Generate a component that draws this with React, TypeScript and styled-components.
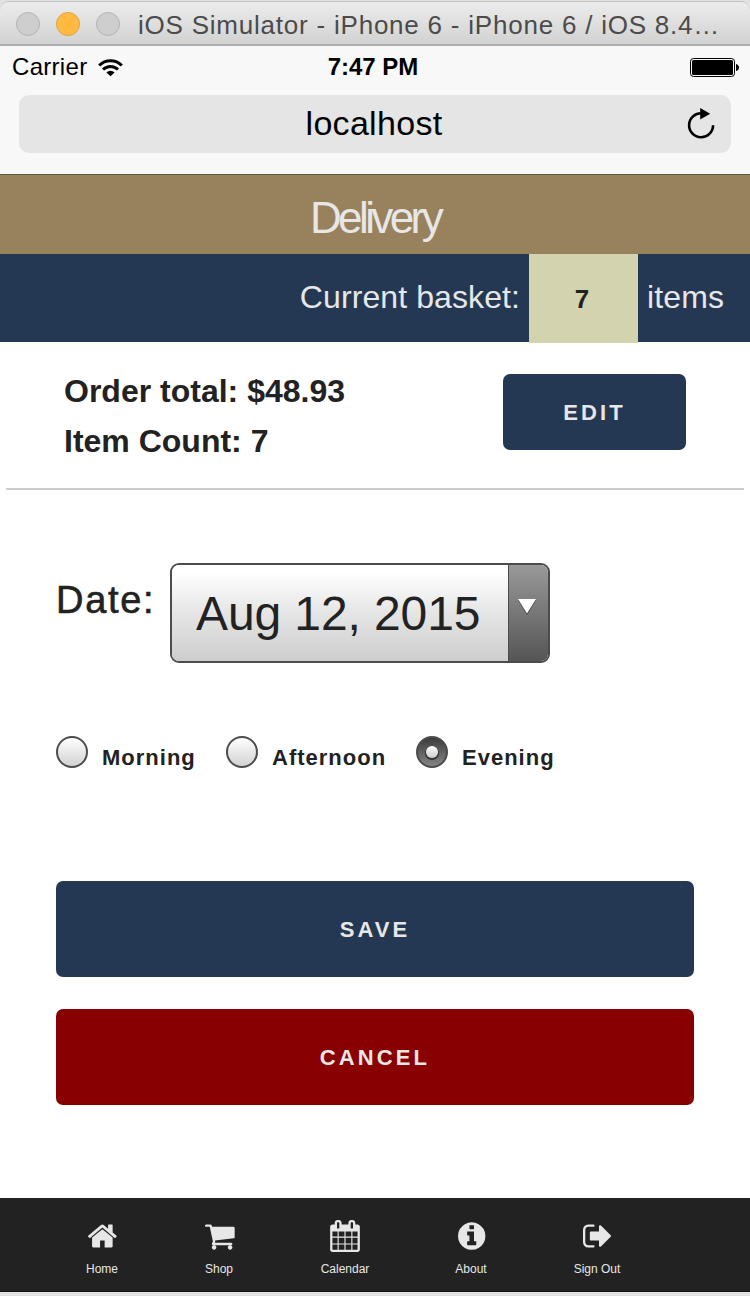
import React from "react";
import styled, { createGlobalStyle } from "styled-components";

const GlobalStyle = createGlobalStyle`
  * { box-sizing: border-box; }
  html, body { margin: 0; padding: 0; background: #e2e2e2; }
  body { font-family: "Liberation Sans", Arial, Helvetica, sans-serif; color: #222; }
  h1, h2 { margin: 0; font-weight: normal; }
  p { margin: 0; }
  button { font-family: inherit; border: 0; padding: 0; }
`;

const Simulator = styled.div`
  width: 750px;
  height: 1296px;
  display: flex;
  flex-direction: column;
  overflow: hidden;
  background: #e2e2e2;
`;

const TitleBar = styled.header`
  flex: none;
  height: 45px;
  margin-top: 1px;
  padding: 2px 0 0 16px;
  display: flex;
  align-items: center;
  border: 1px solid #c0c0c0;
  border-width: 1px 0 2px;
  border-bottom-color: #adadad;
  border-radius: 9px 9px 0 0;
  background: linear-gradient(#ececec, #d2d2d2);
`;

const Lights = styled.div`
  display: flex;
  gap: 16px;
  margin-right: 18px;
`;

const Light = styled.span<{ $active?: boolean }>`
  width: 24px;
  height: 24px;
  border-radius: 50%;
  border: 1px solid ${(p) => (p.$active ? "#dfa032" : "#b2b2b2")};
  background: ${(p) => (p.$active ? "radial-gradient(#ffb53a, #ffc04a)" : "#cecece")};
`;

const WindowTitle = styled.h1`
  padding-top: 2px;
  color: #4b4b4b;
  font-size: 26px;
  line-height: 30px;
  letter-spacing: 0.78px;
  white-space: nowrap;
`;

const BrowserChrome = styled.div`
  flex: none;
  height: 129px;
  background: #f8f8f8;
  border-bottom: 1px solid #655a42;
  color: #000;
`;

const StatusBar = styled.div`
  height: 49px;
  display: grid;
  grid-template-columns: 1fr auto 1fr;
  align-items: center;
  padding: 0 11px 7px 12px;
  font-size: 24px;
  line-height: 28px;
`;

const Carrier = styled.div`
  display: flex;
  align-items: center;
  gap: 11px;
  letter-spacing: 0.3px;
`;

const Clock = styled.strong`
  margin: 0 5px 0 0;
`;

const BatteryIcon = styled.svg`
  justify-self: end;
  display: block;
`;

const AddressBar = styled.div`
  height: 58px;
  margin: 0 19px;
  padding: 0 15px;
  display: grid;
  grid-template-columns: 28px 1fr 30px;
  align-items: center;
  background: #e5e5e5;
  border-radius: 10px;
`;

const Address = styled.span`
  padding-bottom: 2px;
  text-align: center;
  font-size: 34px;
  line-height: 38px;
  letter-spacing: 0.3px;
`;

const ReloadIcon = styled.svg`
  display: block;
  margin-top: -2px;
`;

const PageHeader = styled.div`
  flex: none;
  height: 79px;
  padding-top: 18px;
  background: #97825d;
  color: #e7e7e7;
  text-align: center;
`;

const PageTitle = styled.h2`
  font-size: 44px;
  line-height: 50px;
  letter-spacing: -3.6px;
`;

const BasketBar = styled.div`
  flex: none;
  position: relative;
  z-index: 1;
  height: 88px;
  display: flex;
  justify-content: flex-end;
  padding-right: 26px;
  background: #253853;
  color: #e7e7e7;
  font-size: 32px;
  line-height: 86px;
  letter-spacing: 0.1px;
`;

const BasketCount = styled.strong`
  width: 109px;
  height: 89px;
  margin: 0 9px;
  padding-right: 3px;
  text-align: center;
  line-height: 90px;
  font-size: 26px;
  background: #d3d3af;
  color: #222;
`;

const Content = styled.main`
  flex: none;
  height: 856px;
  background: #fff;
`;

const Summary = styled.section`
  height: 148px;
  margin: 0 6px;
  padding: 24px 58px 0;
  display: flex;
  justify-content: space-between;
  border-bottom: 2px solid #ccc;
`;

const Totals = styled.div`
  font-weight: bold;
  font-size: 32px;
  line-height: 50px;
`;

const Button = styled.button<{ $danger?: boolean; $compact?: boolean }>`
  display: block;
  width: ${(p) => (p.$compact ? "183px" : "100%")};
  height: ${(p) => (p.$compact ? "76px" : "96px")};
  margin-top: ${(p) => (p.$compact ? "8px" : "0")};
  padding-top: 2px;
  border-radius: 7px;
  background: ${(p) => (p.$danger ? "#880000" : "#253853")};
  color: #e7e7e7;
  font-size: 22px;
  font-weight: bold;
  letter-spacing: 3.1px;
`;

const DeliveryForm = styled.form`
  padding: 73px 56px 0;
`;

const DateRow = styled.div`
  display: flex;
  gap: 15px;
`;

const DateLabel = styled.label`
  width: 99px;
  padding-top: 14px;
  font-size: 38px;
  line-height: 46px;
  letter-spacing: 1.7px;
  white-space: nowrap;
  -webkit-text-stroke: 0.6px #222;
`;

const DateSelect = styled.div`
  width: 380px;
  height: 100px;
  display: flex;
  overflow: hidden;
  border: 2px solid #4c4c4c;
  border-radius: 9px;
`;

const DateValue = styled.span`
  flex: 1;
  padding-left: 24px;
  font-size: 48px;
  line-height: 98px;
  letter-spacing: -0.1px;
  white-space: nowrap;
  background: linear-gradient(#fff 8%, #e5e5e5 50%, #cdcdcd);
`;

const DateArrow = styled.span`
  width: 40px;
  display: flex;
  justify-content: center;
  padding: 33px 3px 0 0;
  border-left: 1px solid #4c4c4c;
  background: linear-gradient(#999, #555);
`;

const TimeRow = styled.div`
  display: flex;
  margin-top: 73px;
  gap: 29px;
`;

const TimeOption = styled.label<{ $width: number }>`
  display: flex;
  width: ${(p) => p.$width}px;
  gap: 14px;
  font-size: 22px;
  font-weight: bold;
  line-height: 26px;
  letter-spacing: 1px;
  white-space: nowrap;
`;

const Radio = styled.span<{ $checked?: boolean }>`
  flex: none;
  width: 32px;
  height: 32px;
  display: grid;
  place-items: center;
  border: 2px solid #4c4c4c;
  border-radius: 50%;
  background: ${(p) => (p.$checked ? "linear-gradient(#3c3c3c, #858585)" : "linear-gradient(#fff, #d2d2d2)")};

  &::after {
    content: "";
    display: ${(p) => (p.$checked ? "block" : "none")};
    width: 12px;
    height: 12px;
    border-radius: 50%;
    background: linear-gradient(#fff, #ccc);
    box-shadow: 0 1px 0 1px #333;
  }
`;

const TimeText = styled.span`
  padding-top: 9px;
`;

const Actions = styled.div`
  display: grid;
  gap: 32px;
  margin-top: 110px;
`;

const TabBar = styled.nav`
  flex: none;
  height: 94px;
  display: flex;
  padding: 22px 0 0 48px;
  background: #222;
  border-bottom: 1px solid #111;
`;

const Tab = styled.a<{ $width: number }>`
  width: ${(p) => p.$width}px;
  display: flex;
  flex-direction: column;
  align-items: center;
  color: #e7e7e7;
  font-size: 12px;
  line-height: 14px;
  gap: 10px;
`;

const TabIcon = styled.svg`
  width: 32px;
  height: 32px;
  fill: currentColor;
`;

const tabs = [
  {
    label: "Home",
    width: 108,
    box: "-20 0 1792 1792",
    path: "M1472 992v480q0 26-19 45t-45 19h-384v-384h-256v384h-384q-26 0-45-19t-19-45v-480q0-1 .5-3t.5-3l575-474 575 474q1 2 1 6zm223-69l-62 74q-8 9-21 11h-3q-13 0-21-7l-692-577-692 577q-12 8-24 7-13-2-21-11l-62-74q-8-10-7-23.500t11-21.500l719-599q32-26 76-26t76 26l244 204v-195q0-14 9-23t23-9h192q14 0 23 9t9 23v408l219 182q10 8 11 21.500t-7 23.500z",
  },
  {
    label: "Shop",
    width: 126,
    box: "-110 0 1792 1792",
    path: "M640 1536q0 52-38 90t-90 38-90-38-38-90 38-90 90-38 90 38 38 90zm896 0q0 52-38 90t-90 38-90-38-38-90 38-90 90-38 90 38 38 90zm128-1088v512q0 24-16.500 42.500t-40.500 21.500l-1044 122q13 60 13 70 0 16-24 64h920q26 0 45 19t19 45-19 45-45 19h-1024q-26 0-45-19t-19-45q0-11 8-31.500t16-36 21.500-40 15.500-29.500l-177-823h-204q-26 0-45-19t-19-45 19-45 45-19h256q16 0 28.500 6.500t19.500 15.500 13 24.500 8 26 5.500 29.500 4.500 26h1201q26 0 45 19t19 45z",
  },
  {
    label: "Calendar",
    width: 126,
    box: "0 0 1792 1792",
    path: "M192 1664h288v-288h-288v288zm352 0h320v-288h-320v288zm-352-352h288v-320h-288v320zm352 0h320v-320h-320v320zm-352-384h288v-288h-288v288zm736 736h320v-288h-320v288zm-384-736h320v-288h-320v288zm768 736h288v-288h-288v288zm-384-352h320v-320h-320v320zm-352-864v-288q0-13-9.500-22.500t-22.500-9.500h-64q-13 0-22.500 9.500t-9.500 22.500v288q0 13 9.500 22.500t22.500 9.500h64q13 0 22.500-9.500t9.500-22.500zm736 864h288v-320h-288v320zm-384-384h320v-288h-320v288zm384 0h288v-288h-288v288zm32-480v-288q0-13-9.500-22.500t-22.500-9.500h-64q-13 0-22.500 9.500t-9.500 22.500v288q0 13 9.500 22.500t22.500 9.500h64q13 0 22.500-9.500t9.500-22.500zm384-64v1280q0 52-38 90t-90 38h-1408q-52 0-90-38t-38-90v-1280q0-52 38-90t90-38h128v-96q0-66 47-113t113-47h64q66 0 113 47t47 113v96h384v-96q0-66 47-113t113-47h64q66 0 113 47t47 113v96h128q52 0 90 38t38 90z",
  },
  {
    label: "About",
    width: 126,
    box: "-40 0 1792 1792",
    path: "M1152 1376v-160q0-14-9-23t-23-9h-96v-512q0-14-9-23t-23-9h-320q-14 0-23 9t-9 23v160q0 14 9 23t23 9h96v320h-96q-14 0-23 9t-9 23v160q0 14 9 23t23 9h448q14 0 23-9t9-23zm-128-896v-160q0-14-9-23t-23-9h-192q-14 0-23 9t-9 23v160q0 14 9 23t23 9h192q14 0 23-9t9-23zm640 416q0 209-103 385.500t-279.500 279.500-385.500 103-385.500-103-279.500-279.500-103-385.500 103-385.500 279.500-279.500 385.500-103 385.500 103 279.500 279.500 103 385.500z",
  },
  {
    label: "Sign Out",
    width: 126,
    box: "-48 0 1792 1792",
    path: "M704 1440q0 4 1 20t.5 26.500-3 23.500-10 19.500-20.500 6.500h-320q-119 0-203.500-84.500t-84.500-203.500v-704q0-119 84.500-203.500t203.500-84.500h320q13 0 22.500 9.500t9.500 22.500q0 4 1 20t.5 26.500-3 23.500-10 19.500-20.500 6.500h-320q-66 0-113 47t-47 113v704q0 66 47 113t113 47h312l11.500 1 11.500 3 8 5.500 7 9 2 13.500zm928-544q0 26-19 45l-544 544q-19 19-45 19t-45-19-19-45v-288h-448q-26 0-45-19t-19-45v-384q0-26 19-45t45-19h448v-288q0-26 19-45t45-19 45 19l544 544q19 19 19 45z",
  },
];

const times = [
  { label: "Morning", width: 141 },
  { label: "Afternoon", width: 161 },
  { label: "Evening", width: 140, checked: true },
];

export default function App() {
  return (
    <Simulator>
      <GlobalStyle />
      <TitleBar>
        <Lights>
          <Light />
          <Light $active />
          <Light />
        </Lights>
        <WindowTitle>iOS Simulator - iPhone 6 - iPhone 6 / iOS 8.4…</WindowTitle>
      </TitleBar>

      <BrowserChrome>
        <StatusBar>
          <Carrier>
            Carrier
            <svg width="25" height="19" viewBox="0 0 25 19" fill="none" stroke="#000" strokeWidth="3">
              <path d="M1.200 7.500a16 16 0 0 1 22.600 0" />
              <path d="M5 11.500a10.700 10.700 0 0 1 15 0" />
              <path d="M12.500 18.200l-4.100-3.800a5.900 5.900 0 0 1 8.200 0z" fill="#000" stroke="none" />
            </svg>
          </Carrier>
          <Clock>7:47 PM</Clock>
          <BatteryIcon width="49" height="19" viewBox="0 0 49 19">
            <rect x="0.500" y="0.500" width="44" height="18" rx="3" fill="none" stroke="#000" />
            <rect x="2" y="2" width="41" height="15" rx="1.500" />
            <path d="M46 6q3 1 3 3.500t-3 3.500z" />
          </BatteryIcon>
        </StatusBar>
        <AddressBar>
          <span />
          <Address>localhost</Address>
          <ReloadIcon width="30" height="32" viewBox="0 0 30 32">
            <path d="M16 6.300A12 12 0 1 0 27.100 18.300" fill="none" stroke="#000" strokeWidth="2.600" />
            <path d="M14.200 1v11.600l10-5.800z" />
          </ReloadIcon>
        </AddressBar>
      </BrowserChrome>

      <PageHeader>
        <PageTitle>Delivery</PageTitle>
      </PageHeader>

      <BasketBar>
        <span>Current basket:</span>
        <BasketCount>7</BasketCount>
        <span>items</span>
      </BasketBar>

      <Content>
        <Summary>
          <Totals>
            <p>Order total: $48.93</p>
            <p>Item Count: 7</p>
          </Totals>
          <Button $compact>EDIT</Button>
        </Summary>
        <DeliveryForm>
          <DateRow>
            <DateLabel>Date:</DateLabel>
            <DateSelect>
              <DateValue>Aug 12, 2015</DateValue>
              <DateArrow>
                <svg width="20" height="18" viewBox="0 0 20 18">
                  <path d="M1 2h18L10 17z" fill="#444" />
                  <path d="M1 1h18L10 15.500z" fill="#fff" />
                </svg>
              </DateArrow>
            </DateSelect>
          </DateRow>
          <TimeRow>
            {times.map((t) => (
              <TimeOption key={t.label} $width={t.width}>
                <Radio $checked={t.checked} />
                <TimeText>{t.label}</TimeText>
              </TimeOption>
            ))}
          </TimeRow>
          <Actions>
            <Button type="button">SAVE</Button>
            <Button type="button" $danger>CANCEL</Button>
          </Actions>
        </DeliveryForm>
      </Content>

      <TabBar>
        {tabs.map((t) => (
          <Tab key={t.label} $width={t.width}>
            <TabIcon viewBox={t.box}>
              <path d={t.path} />
            </TabIcon>
            {t.label}
          </Tab>
        ))}
      </TabBar>
    </Simulator>
  );
}
